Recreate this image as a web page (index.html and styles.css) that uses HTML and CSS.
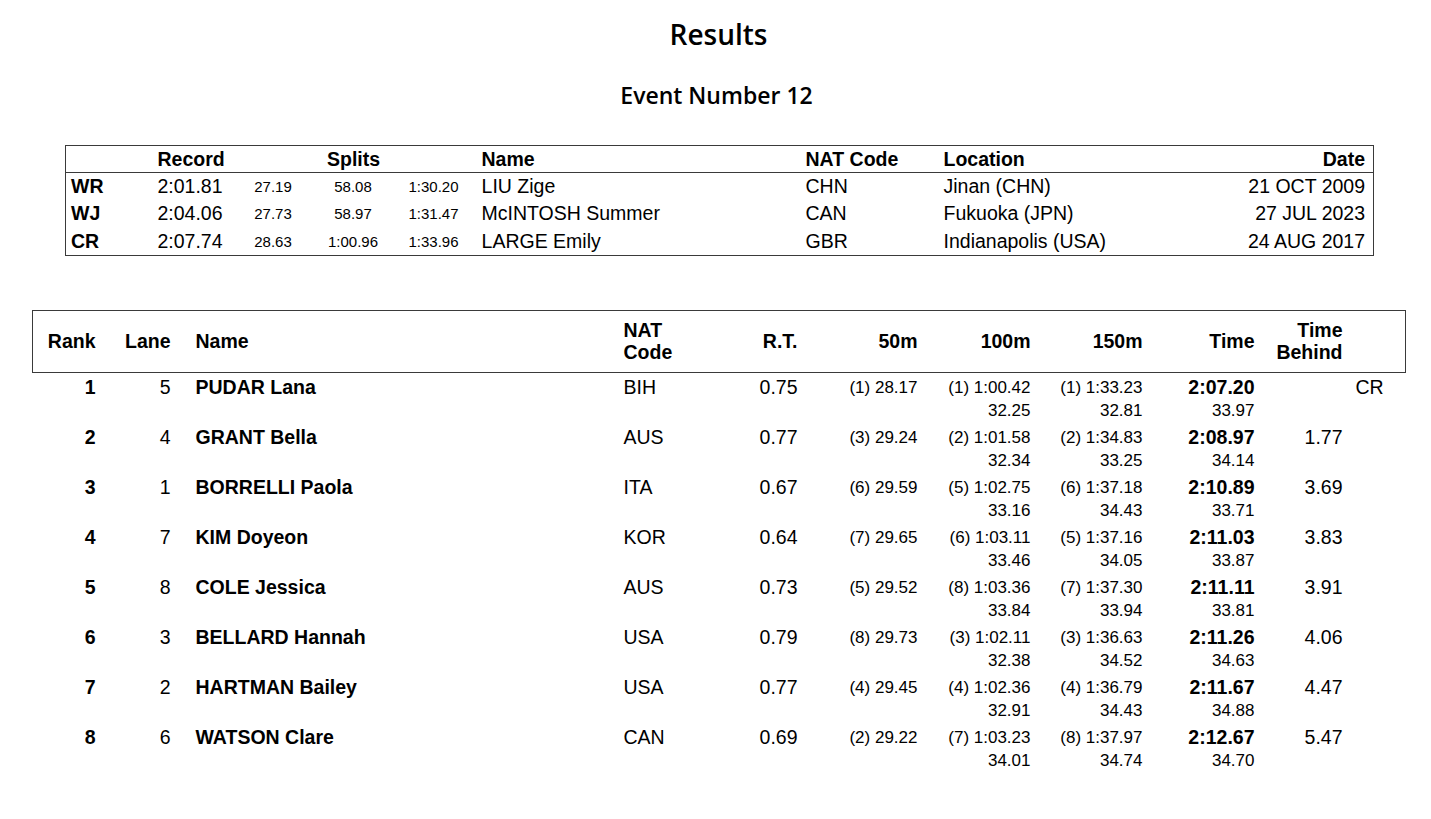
FILE: index.html
```html
<!DOCTYPE html>
<html>
<head>
<meta charset="utf-8">
<link rel="stylesheet" href="styles.css">
</head>
<body>
<div class="page">
  <h1 class="title">Results</h1>
  <h2 class="subtitle">Event Number 12</h2>

  <table class="records">
    <colgroup>
      <col class="rc-code"><col class="rc-rec"><col class="rc-s1"><col class="rc-s2"><col class="rc-s3"><col class="rc-name"><col class="rc-nat"><col class="rc-loc"><col class="rc-date">
    </colgroup>
    <thead>
      <tr>
        <th></th>
        <th class="l pl-rec">Record</th>
        <th colspan="3" class="c">Splits</th>
        <th class="l pl-name">Name</th>
        <th class="l pl-nat">NAT Code</th>
        <th class="l pl-loc">Location</th>
        <th class="r pr-date">Date</th>
      </tr>
    </thead>
    <tbody>
      <tr>
        <td class="code">WR</td><td class="l pl-rec">2:01.81</td>
        <td class="split">27.19</td><td class="split">58.08</td><td class="split">1:30.20</td>
        <td class="l pl-name">LIU Zige</td><td class="l pl-nat">CHN</td><td class="l pl-loc">Jinan (CHN)</td><td class="r pr-date">21 OCT 2009</td>
      </tr>
      <tr>
        <td class="code">WJ</td><td class="l pl-rec">2:04.06</td>
        <td class="split">27.73</td><td class="split">58.97</td><td class="split">1:31.47</td>
        <td class="l pl-name">McINTOSH Summer</td><td class="l pl-nat">CAN</td><td class="l pl-loc">Fukuoka (JPN)</td><td class="r pr-date">27 JUL 2023</td>
      </tr>
      <tr>
        <td class="code">CR</td><td class="l pl-rec">2:07.74</td>
        <td class="split">28.63</td><td class="split">1:00.96</td><td class="split">1:33.96</td>
        <td class="l pl-name">LARGE Emily</td><td class="l pl-nat">GBR</td><td class="l pl-loc">Indianapolis (USA)</td><td class="r pr-date">24 AUG 2017</td>
      </tr>
    </tbody>
  </table>

  <table class="results">
    <colgroup>
      <col class="c-rank"><col class="c-lane"><col class="c-name"><col class="c-nat"><col class="c-rt"><col class="c-50"><col class="c-100"><col class="c-150"><col class="c-time"><col class="c-behind"><col class="c-rec">
    </colgroup>
    <thead>
      <tr>
        <th class="r">Rank</th>
        <th class="r">Lane</th>
        <th class="l pl">Name</th>
        <th class="l pl">NAT<br>Code</th>
        <th class="r">R.T.</th>
        <th class="r">50m</th>
        <th class="r">100m</th>
        <th class="r">150m</th>
        <th class="r">Time</th>
        <th class="r">Time<br>Behind</th>
        <th></th>
      </tr>
    </thead>
    <tbody>
      <tr>
        <td class="r rank">1</td><td class="r lane">5</td><td class="l pl name">PUDAR Lana</td><td class="l pl">BIH</td><td class="r">0.75</td>
        <td class="r sp">(1) 28.17</td>
        <td class="r sp">(1) 1:00.42<div class="sub">32.25</div></td>
        <td class="r sp">(1) 1:33.23<div class="sub">32.81</div></td>
        <td class="r"><b class="time">2:07.20</b><div class="sub">33.97</div></td>
        <td class="r"></td><td class="l">CR</td>
      </tr>
      <tr>
        <td class="r rank">2</td><td class="r lane">4</td><td class="l pl name">GRANT Bella</td><td class="l pl">AUS</td><td class="r">0.77</td>
        <td class="r sp">(3) 29.24</td>
        <td class="r sp">(2) 1:01.58<div class="sub">32.34</div></td>
        <td class="r sp">(2) 1:34.83<div class="sub">33.25</div></td>
        <td class="r"><b class="time">2:08.97</b><div class="sub">34.14</div></td>
        <td class="r">1.77</td><td class="l"></td>
      </tr>
      <tr>
        <td class="r rank">3</td><td class="r lane">1</td><td class="l pl name">BORRELLI Paola</td><td class="l pl">ITA</td><td class="r">0.67</td>
        <td class="r sp">(6) 29.59</td>
        <td class="r sp">(5) 1:02.75<div class="sub">33.16</div></td>
        <td class="r sp">(6) 1:37.18<div class="sub">34.43</div></td>
        <td class="r"><b class="time">2:10.89</b><div class="sub">33.71</div></td>
        <td class="r">3.69</td><td class="l"></td>
      </tr>
      <tr>
        <td class="r rank">4</td><td class="r lane">7</td><td class="l pl name">KIM Doyeon</td><td class="l pl">KOR</td><td class="r">0.64</td>
        <td class="r sp">(7) 29.65</td>
        <td class="r sp">(6) 1:03.11<div class="sub">33.46</div></td>
        <td class="r sp">(5) 1:37.16<div class="sub">34.05</div></td>
        <td class="r"><b class="time">2:11.03</b><div class="sub">33.87</div></td>
        <td class="r">3.83</td><td class="l"></td>
      </tr>
      <tr>
        <td class="r rank">5</td><td class="r lane">8</td><td class="l pl name">COLE Jessica</td><td class="l pl">AUS</td><td class="r">0.73</td>
        <td class="r sp">(5) 29.52</td>
        <td class="r sp">(8) 1:03.36<div class="sub">33.84</div></td>
        <td class="r sp">(7) 1:37.30<div class="sub">33.94</div></td>
        <td class="r"><b class="time">2:11.11</b><div class="sub">33.81</div></td>
        <td class="r">3.91</td><td class="l"></td>
      </tr>
      <tr>
        <td class="r rank">6</td><td class="r lane">3</td><td class="l pl name">BELLARD Hannah</td><td class="l pl">USA</td><td class="r">0.79</td>
        <td class="r sp">(8) 29.73</td>
        <td class="r sp">(3) 1:02.11<div class="sub">32.38</div></td>
        <td class="r sp">(3) 1:36.63<div class="sub">34.52</div></td>
        <td class="r"><b class="time">2:11.26</b><div class="sub">34.63</div></td>
        <td class="r">4.06</td><td class="l"></td>
      </tr>
      <tr>
        <td class="r rank">7</td><td class="r lane">2</td><td class="l pl name">HARTMAN Bailey</td><td class="l pl">USA</td><td class="r">0.77</td>
        <td class="r sp">(4) 29.45</td>
        <td class="r sp">(4) 1:02.36<div class="sub">32.91</div></td>
        <td class="r sp">(4) 1:36.79<div class="sub">34.43</div></td>
        <td class="r"><b class="time">2:11.67</b><div class="sub">34.88</div></td>
        <td class="r">4.47</td><td class="l"></td>
      </tr>
      <tr>
        <td class="r rank">8</td><td class="r lane">6</td><td class="l pl name">WATSON Clare</td><td class="l pl">CAN</td><td class="r">0.69</td>
        <td class="r sp">(2) 29.22</td>
        <td class="r sp">(7) 1:03.23<div class="sub">34.01</div></td>
        <td class="r sp">(8) 1:37.97<div class="sub">34.74</div></td>
        <td class="r"><b class="time">2:12.67</b><div class="sub">34.70</div></td>
        <td class="r">5.47</td><td class="l"></td>
      </tr>
    </tbody>
  </table>
</div>
</body>
</html>
```

FILE: styles.css
```css
html, body {
  margin: 0;
  padding: 0;
  background: #ffffff;
  color: #000000;
}

.page {
  width: 1431px;
  padding-top: 16px;
  font-family: "Liberation Sans", Arial, sans-serif;
}

.title {
  margin: 0;
  padding-left: 6px;
  text-align: center;
  font-family: "Open Sans", "Noto Sans", sans-serif;
  font-weight: 600;
  font-size: 28px;
  line-height: 36px;
}

.subtitle {
  margin: 28px 0 0 0;
  padding-left: 2px;
  text-align: center;
  font-family: "Open Sans", "Noto Sans", sans-serif;
  font-weight: 600;
  font-size: 23px;
  line-height: 30px;
}

table {
  border-collapse: collapse;
  table-layout: fixed;
}

th, td {
  padding: 0;
}

.l { text-align: left; }
.r { text-align: right; }
.c { text-align: center; }

/* Records table */
.records {
  margin: 35px 0 0 65px;
  width: 1308px;
  border: 1px solid #3a3a3a;
  font-size: 19.5px;
}

.rc-code { width: 85px; }
.rc-rec { width: 90px; }
.rc-s1 { width: 65px; }
.rc-s2 { width: 95px; }
.rc-s3 { width: 66px; }
.rc-name { width: 329px; }
.rc-nat { width: 135px; }
.rc-loc { width: 243px; }
.rc-date { width: 200px; }

.records thead tr {
  border-bottom: 1px solid #3a3a3a;
}

.records th {
  height: 26px;
  font-weight: bold;
  line-height: 26px;
}

.records td {
  height: 27.3px;
  line-height: 27px;
}

.records .code {
  font-weight: bold;
  padding-left: 5px;
}

.records .split {
  text-align: center;
  font-size: 15px;
}

.pl-rec { padding-left: 7px; }
.pl-name { padding-left: 15px; }
.pl-nat { padding-left: 10px; }
.pl-loc { padding-left: 13px; }
.pr-date { padding-right: 8px; }

/* Results table */
.results {
  margin: 54px 0 0 32px;
  width: 1373px;
  font-size: 19.5px;
}

.c-rank { width: 76px; }
.c-lane { width: 75px; }
.c-name { width: 428px; }
.c-nat { width: 89px; }
.c-rt { width: 110px; }
.c-50 { width: 120px; }
.c-100 { width: 113px; }
.c-150 { width: 112px; }
.c-time { width: 112px; }
.c-behind { width: 88px; }
.c-rec { width: 50px; }

.results thead tr {
  border: 1px solid #3a3a3a;
}

.results th {
  height: 61px;
  font-weight: bold;
  line-height: 22px;
  vertical-align: middle;
}

.results th.r,
.results td.r {
  padding-right: 13px;
}

.results th.pl,
.results td.pl {
  padding-left: 12px;
}

.results td {
  vertical-align: top;
  padding-top: 3px;
  height: 47px;
  line-height: 23px;
}

.results .rank { font-weight: bold; }

.results .lane {
  padding-right: 14px;
}

.results .name { font-weight: bold; }

.results .sp { font-size: 17px; }

.results .sub {
  font-size: 17px;
  line-height: 23px;
}

.results .time {
  font-weight: bold;
}
```
